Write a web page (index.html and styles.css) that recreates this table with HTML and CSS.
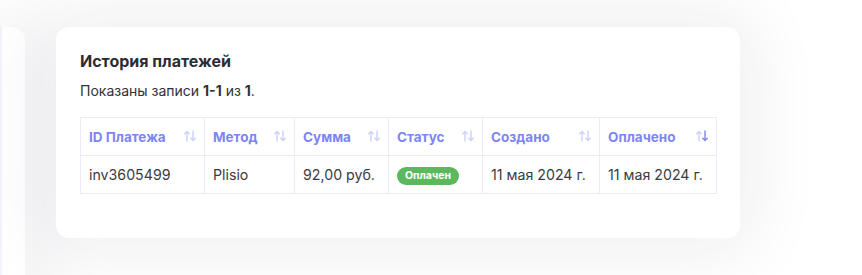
FILE: index.html
```html
<!DOCTYPE html>
<html lang="ru">
<head>
<meta charset="utf-8">
<link rel="stylesheet" href="styles.css">
</head>
<body>
<div class="page">
  <div class="side-card"></div>
  <div class="card">
    <h2 class="title">История платежей</h2>
    <p class="info">Показаны записи <b>1-1</b> из <b>1</b>.</p>
    <table class="tbl">
      <colgroup>
        <col style="width:124px"><col style="width:90px"><col style="width:94px"><col style="width:94px"><col style="width:117px"><col style="width:117px">
      </colgroup>
      <thead>
        <tr>
          <th><span>ID Платежа</span><svg class="sort" viewBox="0 0 12 12"><path d="M3 11V1.5M0.8 3.7L3 1.5 5.2 3.7"/><path d="M9 1v9.5M6.8 8.3L9 10.5 11.2 8.3"/></svg></th>
          <th><span>Метод</span><svg class="sort" viewBox="0 0 12 12"><path d="M3 11V1.5M0.8 3.7L3 1.5 5.2 3.7"/><path d="M9 1v9.5M6.8 8.3L9 10.5 11.2 8.3"/></svg></th>
          <th><span>Сумма</span><svg class="sort" viewBox="0 0 12 12"><path d="M3 11V1.5M0.8 3.7L3 1.5 5.2 3.7"/><path d="M9 1v9.5M6.8 8.3L9 10.5 11.2 8.3"/></svg></th>
          <th><span>Статус</span><svg class="sort" viewBox="0 0 12 12"><path d="M3 11V1.5M0.8 3.7L3 1.5 5.2 3.7"/><path d="M9 1v9.5M6.8 8.3L9 10.5 11.2 8.3"/></svg></th>
          <th><span>Создано</span><svg class="sort" viewBox="0 0 12 12"><path d="M3 11V1.5M0.8 3.7L3 1.5 5.2 3.7"/><path d="M9 1v9.5M6.8 8.3L9 10.5 11.2 8.3"/></svg></th>
          <th><span>Оплачено</span><svg class="sort" viewBox="0 0 12 12"><path d="M3 11V1.5M0.8 3.7L3 1.5 5.2 3.7"/><path class="active" d="M9 1v9.5M6.8 8.3L9 10.5 11.2 8.3"/></svg></th>
        </tr>
      </thead>
      <tbody>
        <tr>
          <td>inv3605499</td>
          <td>Plisio</td>
          <td>92,00 руб.</td>
          <td><span class="badge">Оплачен</span></td>
          <td>11 мая 2024 г.</td>
          <td>11 мая 2024 г.</td>
        </tr>
      </tbody>
    </table>
  </div>
</div>
</body>
</html>
```
FILE: styles.css
```css
html, body {
  margin: 0;
  padding: 0;
  background: #ffffff;
  height: 100%;
  overflow: hidden;
}
body {
  font-family: Inter, "Noto Sans", sans-serif;
  color: #333640;
}
.page {
  display: flex;
  align-items: flex-start;
  gap: 31px;
  padding-top: 27px;
}
.side-card {
  width: 25px;
  height: 320px;
  background: #ffffff;
  border-radius: 0 14px 0 0;
  border-left: 2px solid #f1f5fb;
  box-sizing: border-box;
  box-shadow: 0 0 70px 14px rgba(30, 30, 60, 0.07);
}
.card {
  width: 684px;
  height: 211px;
  box-sizing: border-box;
  background: #ffffff;
  border-radius: 13px;
  padding: 23px 24px 0 24px;
  box-shadow: 0 0 70px 14px rgba(30, 30, 60, 0.07);
}
.title {
  margin: 0;
  font-size: 16px;
  line-height: 22px;
  font-weight: 700;
  color: #2b2d33;
}
.info {
  margin: 9px 0 0 0;
  font-size: 14px;
  line-height: 20px;
  color: #2f3138;
}
.info b {
  font-weight: 700;
}
.tbl {
  margin-top: 16px;
  border-collapse: collapse;
  table-layout: fixed;
  width: 636px;
}
.tbl th, .tbl td {
  border: 1px solid #e9eef6;
  text-align: left;
  padding: 0 8px;
  height: 38px;
  box-sizing: border-box;
}
.tbl th {
  font-size: 13.5px;
  font-weight: 700;
  color: #7d85f4;
  white-space: nowrap;
}
.tbl th span {
  vertical-align: middle;
}
.sort {
  float: right;
  width: 12px;
  height: 12px;
  margin-top: 2px;
  fill: none;
  stroke: #cdd2fa;
  stroke-width: 1.4;
  stroke-linecap: round;
  stroke-linejoin: round;
}
.sort .active {
  stroke: #7d85f4;
}
.tbl td {
  font-size: 14.2px;
  font-weight: 400;
  color: #383b44;
}
.badge {
  display: inline-block;
  background: #5cb85c;
  color: #ffffff;
  font-size: 10.5px;
  font-weight: 700;
  line-height: 18px;
  padding: 0 8px;
  border-radius: 9px;
}
```
